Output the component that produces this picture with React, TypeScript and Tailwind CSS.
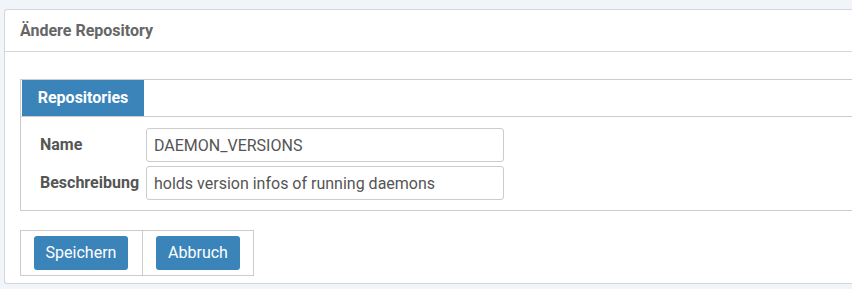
export default function App() {
  return (
    <div className="min-h-[289px] w-[852px] overflow-hidden bg-[#f1f5f9] pl-[4px] pt-[9px] font-['Roboto',sans-serif] text-[16px] text-[#555]">
      <div className="h-[275px] rounded-tl-[3px] rounded-bl-[3px] border-y border-l border-[#d2d6de] bg-white">
        <div className="flex h-[42px] items-center border-b border-[#d2d6de] pl-[15px]">
          <h3 className="text-[16px] font-bold text-[#666]">Ändere Repository</h3>
        </div>
        <div className="pl-[15px] pt-[27px]">
          <div className="border-y border-l border-[#ccc]">
            <div className="flex border-b border-[#ccc] pl-[1px]">
              <div className="flex h-[36px] w-[122px] items-center justify-center bg-[#3a84ba] font-bold text-white">
                Repositories
              </div>
            </div>
            <div className="flex flex-col gap-[4px] pb-[10px] pl-[19px] pt-[11px]">
              <div className="flex items-center">
                <label className="w-[106px] font-bold">Name</label>
                <input
                  className="h-[34px] w-[358px] rounded-[3px] border border-[#ccc] px-[7px] text-[#555] outline-none"
                  defaultValue="DAEMON_VERSIONS"
                />
              </div>
              <div className="flex items-center">
                <label className="w-[106px] font-bold">Beschreibung</label>
                <input
                  className="h-[34px] w-[358px] rounded-[3px] border border-[#ccc] px-[7px] text-[#555] outline-none"
                  defaultValue="holds version infos of running daemons"
                />
              </div>
            </div>
          </div>
          <div className="mt-[19px] flex w-[234px] border border-[#ccc]">
            <div className="border-r border-[#ccc] py-[5px] pl-[13px] pr-[14px]">
              <button className="h-[34px] w-[94px] rounded-[3px] bg-[#3a84ba] text-white">Speichern</button>
            </div>
            <div className="py-[5px] pl-[13px]">
              <button className="h-[34px] w-[84px] rounded-[3px] bg-[#3a84ba] text-white">Abbruch</button>
            </div>
          </div>
        </div>
      </div>
    </div>
  );
}
